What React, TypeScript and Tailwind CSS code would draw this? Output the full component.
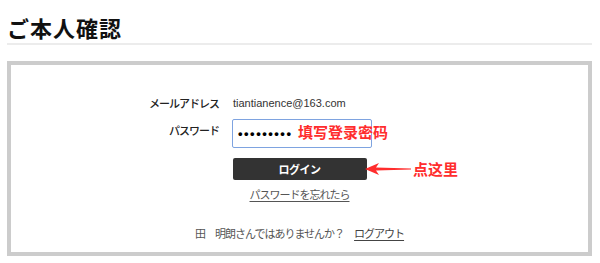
import React from "react";

const jp = { fontFamily: '"Noto Sans CJK JP", "Noto Sans", sans-serif' };
const lat = { fontFamily: '"Liberation Sans", "Noto Sans CJK JP", sans-serif' };

export default function App() {
  return (
    <div className="relative w-[600px] h-[263px] bg-white pl-[7px] pr-[8px] pt-[12px]" style={jp}>
      <div className="border-b-2 border-[#ececec] pb-px">
        <h1 className="text-[22px] leading-[30px] font-bold text-[#111] tracking-[1px]">ご本人確認</h1>
      </div>
      <div className="mt-[16px] border-4 border-[#cccccc] h-[195px] pt-[30px]">
        <div className="flex items-center h-[16px]">
          <div className="w-[208px] text-right text-[11px] leading-[16px] tracking-[-1px] font-medium text-[#222]">メールアドレス</div>
          <div className="ml-[14px] text-[11px] leading-[16px] text-[#333]" style={lat}>tiantianence@163.com</div>
        </div>
        <div className="flex items-start mt-[8px]">
          <div className="w-[208px] text-right text-[11px] leading-[16px] tracking-[-1px] font-medium text-[#222] mt-[3px]">パスワード</div>
          <div className="ml-[13px] w-[140px] h-[29px] border border-[#7ea3e0] rounded-[2px] flex items-center pl-[5px]">
            <span className="text-[13px] tracking-[1.5px] text-black font-bold" style={lat}>•••••••••</span>
          </div>
        </div>
        <div className="flex justify-center mt-[10px]">
          <div className="w-[134px] h-[22px] bg-[#333333] rounded-[2px] flex items-center justify-center text-white text-[11px] font-bold tracking-[-0.5px]">ログイン</div>
        </div>
        <div className="flex justify-center mt-[6px]">
          <span className="text-[11px] leading-[16px] tracking-[-1px] text-[#555] underline underline-offset-2">パスワードを忘れたら</span>
        </div>
        <div className="flex justify-center mt-[23px]">
          <span className="text-[11px] leading-[16px] tracking-[-1px] text-[#555]">
            田　明朗さんではありませんか？　<span className="underline underline-offset-2 text-[#444]">ログアウト</span>
          </span>
        </div>
      </div>

      <div className="absolute left-[298px] top-[122px] text-[15px] leading-[20px] font-bold text-[#ff2d2d]" style={{ fontFamily: '"Noto Sans CJK SC", sans-serif' }}>填写登录密码</div>
      <svg className="absolute left-[365px] top-[163px]" width="47" height="12" viewBox="0 0 47 12">
        <polygon points="0,6 14,0 11,4.6 46,5.4 46,6.6 11,7.4 14,12" fill="#ff2d2d" />
      </svg>
      <div className="absolute left-[413px] top-[159px] text-[15px] leading-[20px] font-bold text-[#ff2d2d]" style={{ fontFamily: '"Noto Sans CJK SC", sans-serif' }}>点这里</div>
    </div>
  );
}
